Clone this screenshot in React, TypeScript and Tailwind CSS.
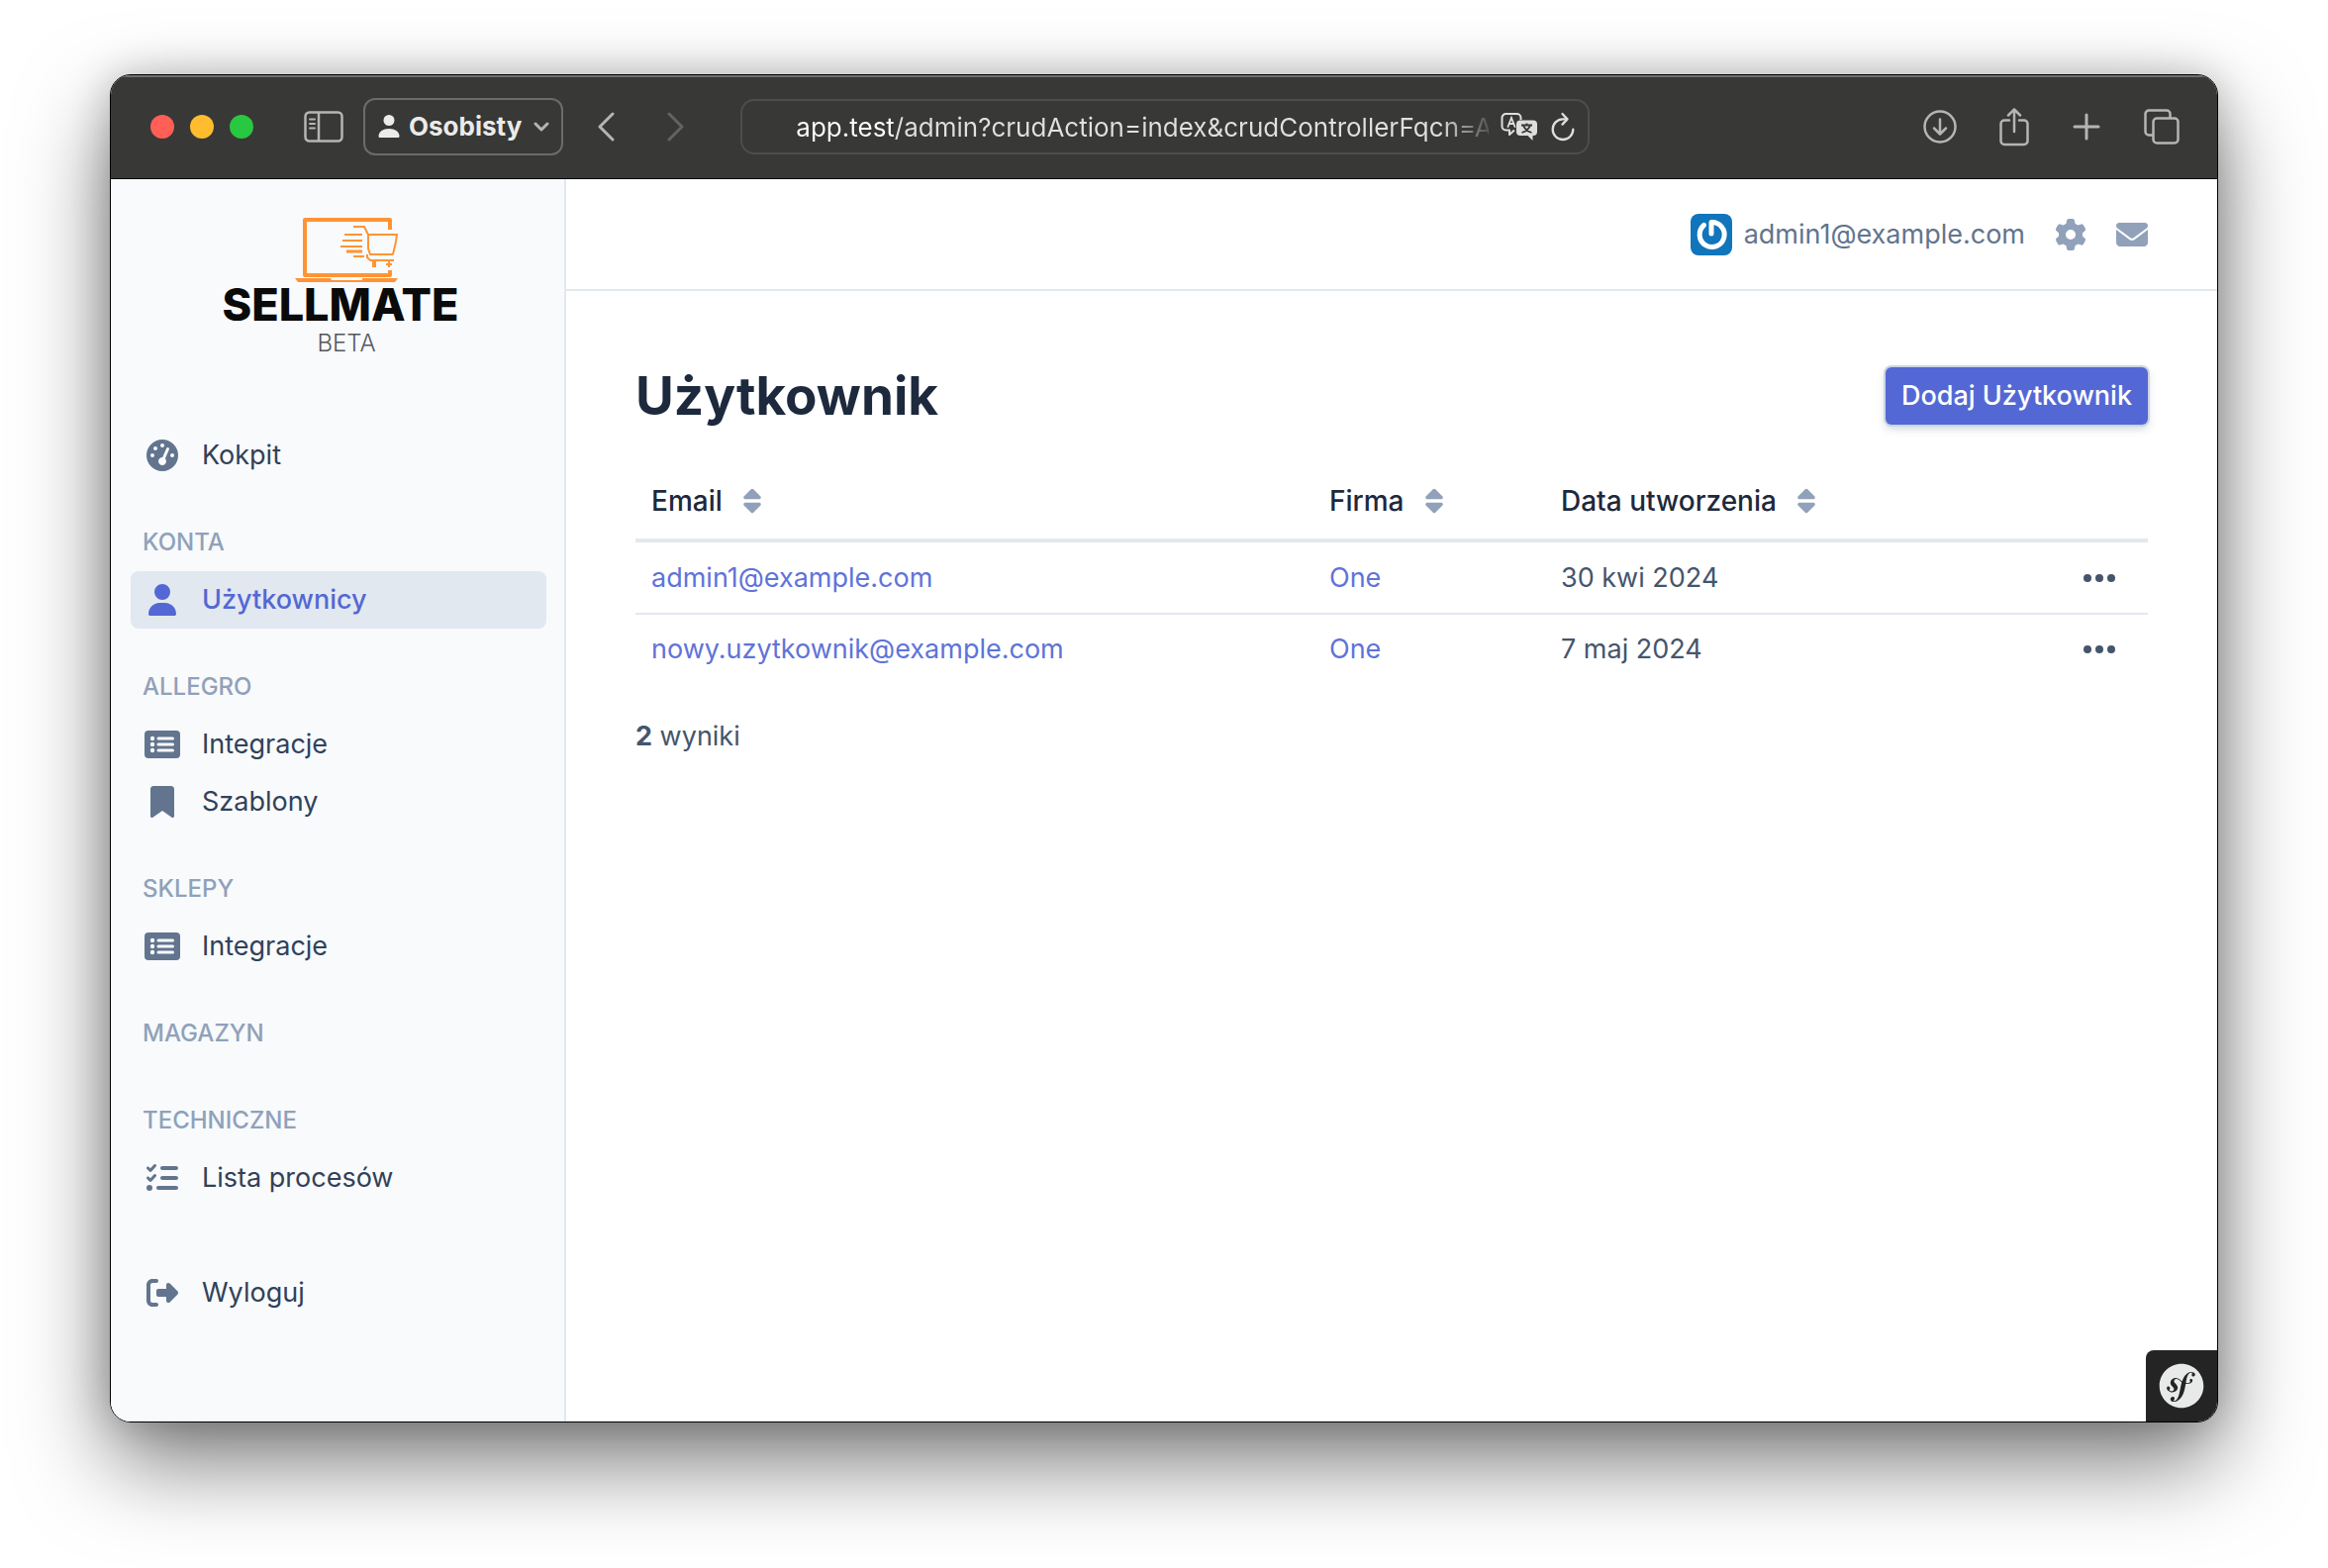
import type { ComponentType, ReactNode } from "react";
import {
  FaBookmark,
  FaEnvelope,
  FaGaugeHigh,
  FaGear,
  FaListCheck,
  FaRightFromBracket,
  FaSort,
  FaSymfony,
  FaUser,
} from "react-icons/fa6";

type IconProps = { className?: string };
type MenuEntry = { label: string; icon: ComponentType<IconProps>; active?: boolean };
type MenuSection = { title?: string; items: MenuEntry[] };

function ListIcon() {
  return (
    <svg width="36" height="28" viewBox="0 0 36 28" fill="none">
      <rect width="36" height="28" rx="4" fill="currentColor" />
      <g fill="#f8fafc">
        <circle cx="8" cy="8" r="2.200" />
        <circle cx="8" cy="14" r="2.200" />
        <circle cx="8" cy="20" r="2.200" />
        <rect x="12.500" y="6.500" width="17.500" height="3" rx="1.500" />
        <rect x="12.500" y="12.500" width="17.500" height="3" rx="1.500" />
        <rect x="12.500" y="18.500" width="17.500" height="3" rx="1.500" />
      </g>
    </svg>
  );
}

const sections: MenuSection[] = [
  { items: [{ label: "Kokpit", icon: FaGaugeHigh }] },
  { title: "KONTA", items: [{ label: "Użytkownicy", icon: FaUser, active: true }] },
  {
    title: "ALLEGRO",
    items: [
      { label: "Integracje", icon: ListIcon },
      { label: "Szablony", icon: FaBookmark },
    ],
  },
  { title: "SKLEPY", items: [{ label: "Integracje", icon: ListIcon }] },
  { title: "MAGAZYN", items: [] },
  { title: "TECHNICZNE", items: [{ label: "Lista procesów", icon: FaListCheck }] },
];

const users = [
  { email: "admin1@example.com", company: "One", created: "30 kwi 2024" },
  { email: "nowy.uzytkownik@example.com", company: "One", created: "7 maj 2024" },
];

function ToolbarButton({ label, children }: { label: string; children: ReactNode }) {
  return (
    <button type="button" aria-label={label} className="flex shrink-0 items-center justify-center">
      {children}
    </button>
  );
}

function BrowserToolbar() {
  return (
    <header className="flex h-[105px] shrink-0 items-center border-t-2 border-b border-t-[#70716d] border-b-black bg-[#383836] pr-[38px] pb-0.5 pl-10 text-[#b5b5b4]">
      <div className="flex shrink-0 gap-4">
        <button type="button" aria-label="Zamknij" className="size-6 rounded-full bg-[#ff5f57]" />
        <button type="button" aria-label="Minimalizuj" className="size-6 rounded-full bg-[#febc2e]" />
        <button type="button" aria-label="Maksymalizuj" className="size-6 rounded-full bg-[#28c840]" />
      </div>

      <div className="ml-[51px] flex shrink-0 items-center">
        <ToolbarButton label="Pasek boczny">
          <svg width="40" height="32" viewBox="0 0 40 32" fill="none" stroke="currentColor" strokeWidth="2.5">
            <rect x="1.5" y="1.5" width="37" height="29" rx="4" />
            <path d="M15 2v28" />
            <path d="M6 8.500h5M6 13h5M6 17.500h5" strokeWidth="2" strokeLinecap="round" />
          </svg>
        </ToolbarButton>
        <button
          type="button"
          className="ml-5 flex h-[58px] items-center rounded-xl border-2 border-[#6c6c6b] px-3 text-[26px] leading-8 font-bold text-[#ebebea]"
        >
          <svg width="24" height="26" viewBox="0 0 24 26" fill="currentColor">
            <circle cx="12" cy="6.500" r="5.500" />
            <path d="M1.500 22.500c0-4.500 4.500-7.500 10.500-7.500s10.500 3 10.500 7.500c0 1-.6 1.500-1.500 1.500h-18c-.9 0-1.500-.5-1.500-1.500z" />
          </svg>
          <span className="ml-2">Osobisty</span>
          <svg className="ml-3" width="16" height="12" viewBox="0 0 16 12" fill="none" stroke="#b5b5b4" strokeWidth="3" strokeLinecap="round" strokeLinejoin="round">
            <path d="M2 3l6 6 6-6" />
          </svg>
        </button>
      </div>

      <div className="ml-[34px] flex shrink-0 items-center gap-[53px]">
        <ToolbarButton label="Wstecz">
          <svg width="18" height="32" viewBox="0 0 18 32" fill="none" stroke="currentColor" strokeWidth="3" strokeLinecap="round" strokeLinejoin="round">
            <path d="M16 3L3 16l13 13" />
          </svg>
        </ToolbarButton>
        <ToolbarButton label="Dalej">
          <svg width="18" height="32" viewBox="0 0 18 32" fill="none" stroke="#636361" strokeWidth="3" strokeLinecap="round" strokeLinejoin="round">
            <path d="M2 3l13 13L2 29" />
          </svg>
        </ToolbarButton>
      </div>

      <div className="ml-14 flex h-14 w-[858px] min-w-0 items-center rounded-[14px] border-2 border-[#4d4d4b] pr-3 pl-[54px]">
        <input
          type="text"
          aria-label="Adres strony"
          readOnly
          value="app.test/admin?crudAction=index&crudControllerFqcn=App"
          className="h-10 min-w-0 flex-1 bg-[linear-gradient(90deg,#ffffff_98px,#e0e0df_98px,#e0e0df_650px,#383836_710px)] bg-clip-text text-[26px] leading-8 text-transparent outline-none"
        />
        <div className="ml-3 flex shrink-0 items-center gap-3">
          <ToolbarButton label="Przetłumacz">
            <svg width="38" height="30" viewBox="0 0 38 30" fill="none">
              <path
                d="M14 18.500l-5 4.500v-4.500H5.500a4 4 0 0 1-4-4V6a4 4 0 0 1 4-4h11a4 4 0 0 1 4 4v2"
                stroke="#dededd"
                strokeWidth="2"
                strokeLinejoin="round"
              />
              <path d="M7.500 15L11 6l3.500 9M8.700 12h4.600" stroke="#dededd" strokeWidth="1.800" strokeLinecap="round" />
              <path
                d="M20 8.500h13a4 4 0 0 1 4 4V20a4 4 0 0 1-4 4h-.5v5l-5-5H20a4 4 0 0 1-4-4v-7.500a4 4 0 0 1 4-4z"
                fill="#dededd"
              />
              <path d="M21 13.500h11M26.500 11.500v2M30 13.500c-1 3.500-4 6-8.500 7.500M23 13.500c1 3.500 4 6 8.500 7.500" stroke="#383836" strokeWidth="1.800" />
            </svg>
          </ToolbarButton>
          <ToolbarButton label="Odśwież">
            <svg width="26" height="30" viewBox="0 0 26 30" fill="none" stroke="#dededd" strokeWidth="2.300" strokeLinecap="round" strokeLinejoin="round">
              <path d="M17 7.400H13A10.300 10.300 0 1 0 23.300 17.700" />
              <path d="M12.500 2l5 5.400-5 5.200" />
            </svg>
          </ToolbarButton>
        </div>
      </div>

      <div className="ml-auto flex shrink-0 items-center pl-6">
        <ToolbarButton label="Pobrane">
          <svg width="34" height="34" viewBox="0 0 34 34" fill="none" stroke="currentColor" strokeWidth="2.500" strokeLinecap="round" strokeLinejoin="round">
            <circle cx="17" cy="17" r="15.500" />
            <path d="M17 9.500v14.500M11 18.500l6 6 6-6" />
          </svg>
        </ToolbarButton>
        <span className="ml-[43px] flex">
          <ToolbarButton label="Udostępnij">
            <svg width="30" height="40" viewBox="0 0 30 40" fill="none" stroke="currentColor" strokeWidth="2.500" strokeLinecap="round" strokeLinejoin="round">
              <path d="M10 13.500H5a3.500 3.500 0 0 0-3.500 3.500v17.500A3.500 3.500 0 0 0 5 38h20a3.500 3.500 0 0 0 3.500-3.500V17a3.500 3.500 0 0 0-3.500-3.500h-5" />
              <path d="M15 25V3M9 8.500l6-6 6 6" />
            </svg>
          </ToolbarButton>
        </span>
        <span className="ml-11 flex">
          <ToolbarButton label="Nowa karta">
            <svg width="28" height="28" viewBox="0 0 28 28" fill="none" stroke="currentColor" strokeWidth="3" strokeLinecap="round">
              <path d="M14 2v24M2 14h24" />
            </svg>
          </ToolbarButton>
        </span>
        <span className="ml-11 flex">
          <ToolbarButton label="Karty">
            <svg width="36" height="36" viewBox="0 0 36 36" fill="none" stroke="currentColor" strokeWidth="2.500" strokeLinejoin="round">
              <path d="M9 26.500H5A3.500 3.500 0 0 1 1.500 23V5A3.500 3.500 0 0 1 5 1.500h18A3.500 3.500 0 0 1 26.500 5v4" />
              <rect x="9.500" y="9.500" width="25" height="25" rx="3.500" />
            </svg>
          </ToolbarButton>
        </span>
      </div>
    </header>
  );
}

function Logo() {
  return (
    <a href="#kokpit" aria-label="Sellmate Beta" className="flex flex-col items-center pt-9 pl-1">
      <svg className="ml-4 h-[70px] w-[110px]" viewBox="0 0 110 70" fill="none" stroke="#ff9436">
        <path d="M97 15V5H11v56h86v-5" strokeWidth="4" strokeLinejoin="round" />
        <path d="M1 64h104l-3 4H4z" fill="#ff9436" stroke="none" />
        <path d="M37 64h32v2H38z" fill="#fff" stroke="none" />
        <path d="M60 12h11l4 8v14l2 6h23M74 20h30l-1 7-3 13" strokeWidth="2" />
        <path d="M51 20h18M49 26h20M47 32h22M60 42h11" strokeWidth="2" />
        <path d="M53 37h16" strokeWidth="3" />
        <path d="M74 40v3l3 3h24" strokeWidth="2" />
        <path d="M81 46v7" strokeWidth="4" />
        <path d="M96 46v7M93 50h6" strokeWidth="2" />
      </svg>
      <span className="text-[45px] leading-[42px] font-extrabold text-[#0a0a0a]">SELLMATE</span>
      <span className="mt-1 ml-3 text-2xl leading-7 font-light text-[#55585c]">BETA</span>
    </a>
  );
}

function MenuItem({ label, icon: Icon, active }: MenuEntry) {
  return (
    <li>
      <a
        href={"#" + label}
        aria-current={active ? "page" : undefined}
        className={
          active
            ? "flex h-[58px] items-center gap-[22px] rounded-lg bg-slate-200 px-3.5 text-[27px] leading-8 font-medium text-[#5368d5]"
            : "flex h-[58px] items-center gap-[22px] rounded-lg px-3.5 text-[27px] leading-8 text-slate-700"
        }
      >
        <span className={active ? "flex w-9 justify-center" : "flex w-9 justify-center text-slate-500"}>
          <Icon className="h-8 w-auto" />
        </span>
        <span className="whitespace-nowrap">{label}</span>
      </a>
    </li>
  );
}

function Sidebar() {
  return (
    <aside className="w-[460px] shrink-0 border-r-2 border-slate-200 bg-slate-50 pr-[18px] pl-5">
      <Logo />
      <nav aria-label="Menu główne" className="mt-[70px]">
        {sections.map((section) => (
          <div key={section.title ?? "start"}>
            {section.title && (
              <h2 className="px-3 pt-[46px] pb-4 text-[24px] leading-[26px] font-medium text-slate-400">{section.title}</h2>
            )}
            <ul>
              {section.items.map((item) => (
                <MenuItem key={item.label} {...item} />
              ))}
            </ul>
          </div>
        ))}
        <ul className="mt-[58px]">
          <MenuItem label="Wyloguj" icon={FaRightFromBracket} />
        </ul>
      </nav>
    </aside>
  );
}

function Avatar() {
  return (
    <svg className="size-[42px] rounded-lg" viewBox="0 0 42 42" fill="none">
      <rect width="42" height="42" fill="#1075bb" />
      <path d="M13.500 11.500A12.500 12.500 0 1 0 21 8.500V20" stroke="#ffffff" strokeWidth="5" strokeLinecap="round" strokeLinejoin="round" />
    </svg>
  );
}

function UserBar() {
  return (
    <div className="flex h-[113px] shrink-0 items-center justify-end border-b-2 border-slate-200 pr-[70px] text-slate-400">
      <button type="button" className="flex items-center gap-3 text-[27px] leading-8 text-slate-500">
        <Avatar />
        admin1@example.com
      </button>
      <button type="button" aria-label="Ustawienia" className="ml-[30px]">
        <FaGear className="size-8" />
      </button>
      <button type="button" aria-label="Wiadomości" className="ml-[30px]">
        <FaEnvelope className="size-8" />
      </button>
    </div>
  );
}

function SortableHeader({ label, className }: { label: string; className: string }) {
  return (
    <th scope="col" className={className}>
      <button type="button" className="flex items-center gap-4 font-medium">
        {label}
        <FaSort className="h-7 w-auto text-slate-400" />
      </button>
    </th>
  );
}

function UsersTable() {
  return (
    <table className="mt-[37px] w-full table-fixed text-left text-[27px] leading-8 text-slate-600">
      <thead className="border-b-4 border-slate-200 text-[28px] text-slate-800">
        <tr className="h-[79px]">
          <SortableHeader label="Email" className="w-[685px] px-4" />
          <SortableHeader label="Firma" className="w-[234px] px-4" />
          <SortableHeader label="Data utworzenia" className="px-4" />
          <th scope="col" aria-label="Akcje" className="w-[120px]" />
        </tr>
      </thead>
      <tbody className="divide-y-2 divide-slate-200">
        {users.map((user) => (
          <tr key={user.email} className="h-[70px] first:h-[74px]">
            <td className="px-4">
              <a href={"mailto:" + user.email} className="text-[#5f73d9]">
                {user.email}
              </a>
            </td>
            <td className="px-4">
              <a href="#firma" className="text-[#5f73d9]">
                {user.company}
              </a>
            </td>
            <td className="px-4">{user.created}</td>
            <td className="pr-8">
              <button type="button" aria-label={"Akcje: " + user.email} className="ml-auto block">
                <svg width="34" height="10" viewBox="0 0 34 10" fill="currentColor">
                  <circle cx="5" cy="5" r="4" />
                  <circle cx="17" cy="5" r="4" />
                  <circle cx="29" cy="5" r="4" />
                </svg>
              </button>
            </td>
          </tr>
        ))}
      </tbody>
    </table>
  );
}

export default function App() {
  return (
    <div className="flex min-h-screen flex-col bg-white px-[111px] pt-[75px] pb-[147px] font-['Inter',sans-serif]">
      <div className="flex flex-1 flex-col overflow-hidden rounded-[21px] border border-black shadow-[0_0_40px_rgba(0,0,0,0.2),0_40px_90px_rgba(0,0,0,0.52)]">
        <BrowserToolbar />
        <div className="flex flex-1">
          <Sidebar />
          <div className="relative flex min-w-0 flex-1 flex-col">
            <UserBar />
            <main className="px-[70px] pt-[76px] pb-16">
              <div className="flex items-center justify-between">
                <h1 className="text-[53px] leading-[60px] font-bold text-slate-800">Użytkownik</h1>
                <a
                  href="#dodaj"
                  className="flex h-[58px] items-center rounded-md bg-[#5368d5] px-4 text-[27px] leading-8 font-medium text-white shadow-[0_0_0_2px_#cbd5e1,0_4px_8px_rgba(100,116,139,0.3)]"
                >
                  Dodaj Użytkownik
                </a>
              </div>
              <UsersTable />
              <p className="mt-9 text-[27px] leading-9 text-slate-600">
                <strong className="font-bold">2</strong> wyniki
              </p>
            </main>
            <button
              type="button"
              aria-label="Symfony"
              className="absolute right-0 bottom-0 flex h-[72px] w-[72px] items-center justify-center rounded-tl-lg bg-[#242424] text-[#e8eae9]"
            >
              <FaSymfony className="size-[46px]" />
            </button>
          </div>
        </div>
      </div>
    </div>
  );
}
